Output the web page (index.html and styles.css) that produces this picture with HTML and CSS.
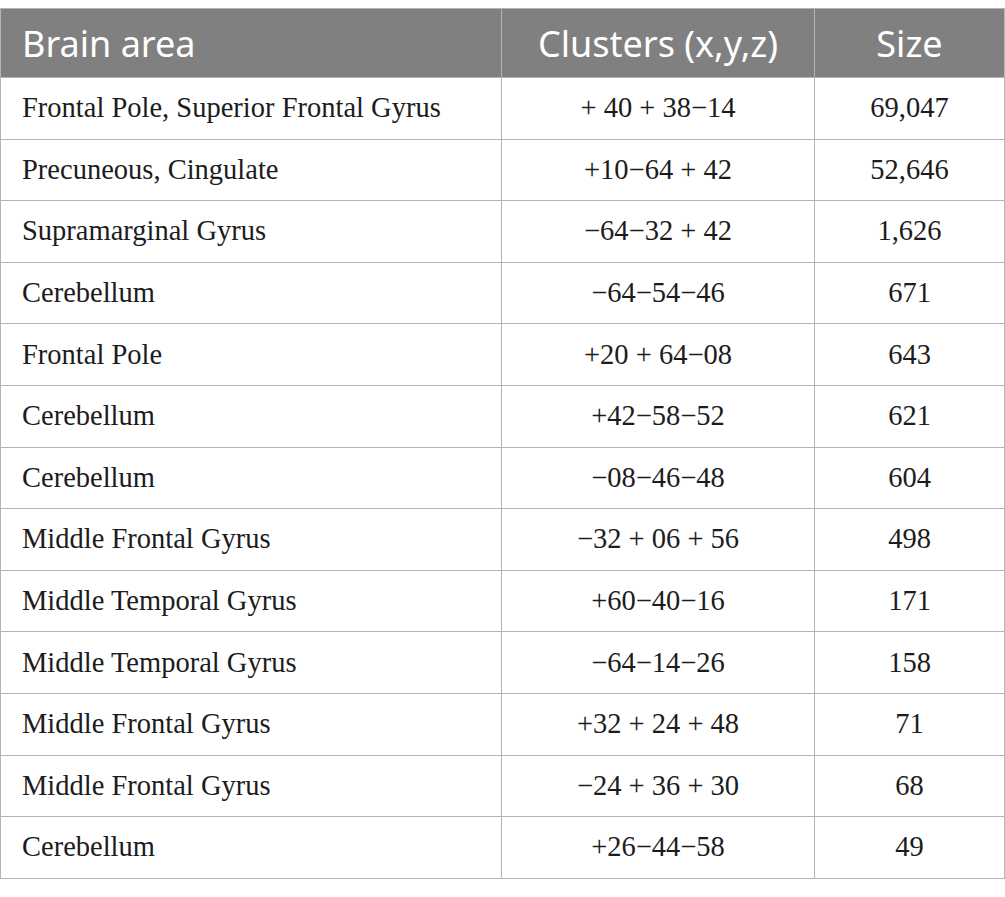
FILE: index.html
```html
<!DOCTYPE html>
<html>
<head>
<meta charset="utf-8">
<link rel="stylesheet" href="styles.css">
</head>
<body>
<table class="data">
  <thead>
    <tr><th class="c1">Brain area</th><th class="c2">Clusters (x,y,z)</th><th class="c3">Size</th></tr>
  </thead>
  <tbody>
    <tr><td>Frontal Pole, Superior Frontal Gyrus</td><td class="ctr">+ 40 + 38−14</td><td class="ctr">69,047</td></tr>
    <tr><td>Precuneous, Cingulate</td><td class="ctr">+10−64 + 42</td><td class="ctr">52,646</td></tr>
    <tr><td>Supramarginal Gyrus</td><td class="ctr">−64−32 + 42</td><td class="ctr">1,626</td></tr>
    <tr><td>Cerebellum</td><td class="ctr">−64−54−46</td><td class="ctr">671</td></tr>
    <tr><td>Frontal Pole</td><td class="ctr">+20 + 64−08</td><td class="ctr">643</td></tr>
    <tr><td>Cerebellum</td><td class="ctr">+42−58−52</td><td class="ctr">621</td></tr>
    <tr><td>Cerebellum</td><td class="ctr">−08−46−48</td><td class="ctr">604</td></tr>
    <tr><td>Middle Frontal Gyrus</td><td class="ctr">−32 + 06 + 56</td><td class="ctr">498</td></tr>
    <tr><td>Middle Temporal Gyrus</td><td class="ctr">+60−40−16</td><td class="ctr">171</td></tr>
    <tr><td>Middle Temporal Gyrus</td><td class="ctr">−64−14−26</td><td class="ctr">158</td></tr>
    <tr><td>Middle Frontal Gyrus</td><td class="ctr">+32 + 24 + 48</td><td class="ctr">71</td></tr>
    <tr><td>Middle Frontal Gyrus</td><td class="ctr">−24 + 36 + 30</td><td class="ctr">68</td></tr>
    <tr><td>Cerebellum</td><td class="ctr">+26−44−58</td><td class="ctr">49</td></tr>
  </tbody>
</table>
</body>
</html>
```
FILE: styles.css
```css
html, body {
  margin: 0;
  padding: 0;
  background: #ffffff;
}
body {
  padding-top: 8px;
}
.data {
  width: 1005px;
  border-collapse: collapse;
  table-layout: fixed;
  font-family: "Liberation Serif", "Times New Roman", serif;
  color: #1c1c1c;
}
.data th, .data td {
  border: 1px solid #b4b4b4;
  padding: 0 0 0 21px;
}
.data th {
  background: #808080;
  color: #ffffff;
  font-family: "Noto Sans", "Open Sans", sans-serif;
  font-weight: 400;
  font-size: 36px;
  height: 68px;
  text-align: center;
  padding: 0;
}
.data th.c1 { width: 501px; text-align: left; padding-left: 21px; box-sizing: border-box; }
.data th.c2 { width: 312px; }
.data td {
  font-size: 28.5px;
  height: 60.6px;
}
.data td.ctr {
  text-align: center;
  padding: 0;
}
```
